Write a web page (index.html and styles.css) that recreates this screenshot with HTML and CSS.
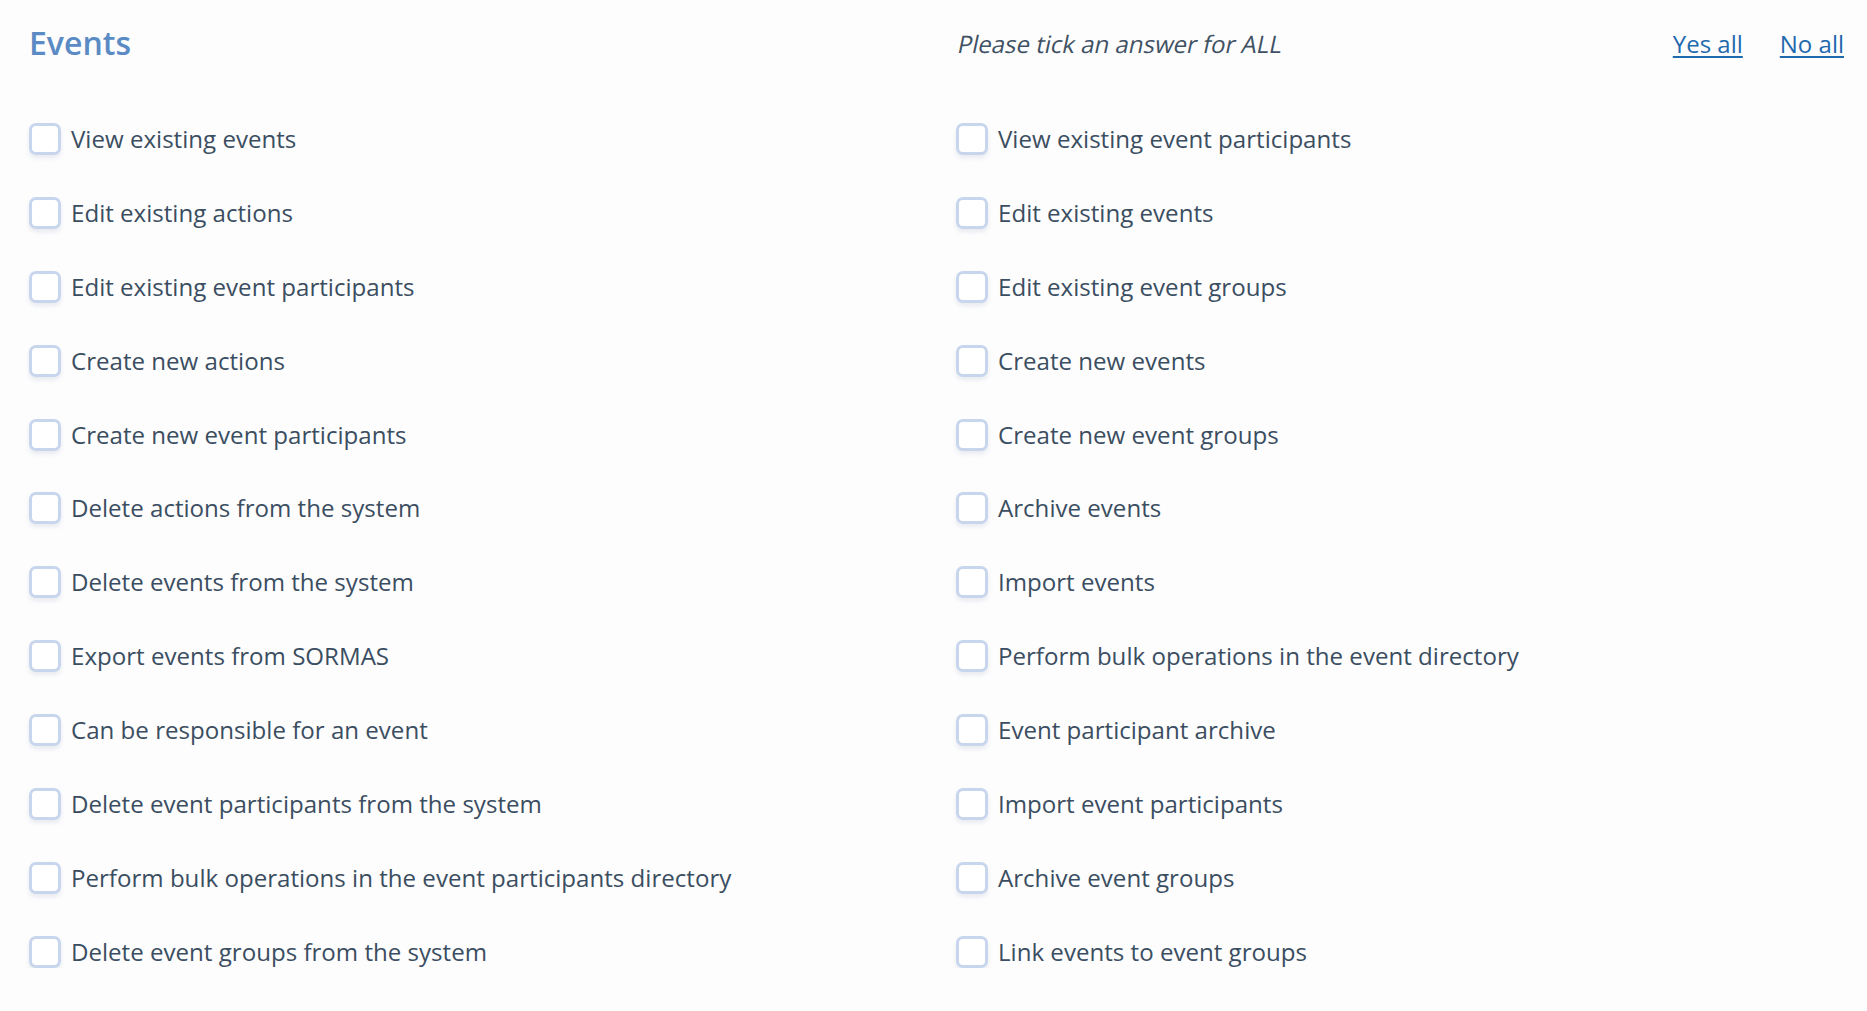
FILE: index.html
```html
<!DOCTYPE html>
<html lang="en">
<head>
<meta charset="utf-8">
<title>Events</title>
<link rel="stylesheet" href="styles.css">
</head>
<body>
<div class="page">
  <div class="header">
    <h1 class="title">Events</h1>
    <div class="header-right">
      <span class="hint">Please tick an answer for ALL</span>
      <div class="links">
        <a href="#" class="link">Yes all</a>
        <a href="#" class="link">No all</a>
      </div>
    </div>
  </div>
  <div class="grid">
    <label class="item"><span class="box"></span><span class="label">View existing events</span></label>
    <label class="item"><span class="box"></span><span class="label">View existing event participants</span></label>
    <label class="item"><span class="box"></span><span class="label">Edit existing actions</span></label>
    <label class="item"><span class="box"></span><span class="label">Edit existing events</span></label>
    <label class="item"><span class="box"></span><span class="label">Edit existing event participants</span></label>
    <label class="item"><span class="box"></span><span class="label">Edit existing event groups</span></label>
    <label class="item"><span class="box"></span><span class="label">Create new actions</span></label>
    <label class="item"><span class="box"></span><span class="label">Create new events</span></label>
    <label class="item"><span class="box"></span><span class="label">Create new event participants</span></label>
    <label class="item"><span class="box"></span><span class="label">Create new event groups</span></label>
    <label class="item"><span class="box"></span><span class="label">Delete actions from the system</span></label>
    <label class="item"><span class="box"></span><span class="label">Archive events</span></label>
    <label class="item"><span class="box"></span><span class="label">Delete events from the system</span></label>
    <label class="item"><span class="box"></span><span class="label">Import events</span></label>
    <label class="item"><span class="box"></span><span class="label">Export events from SORMAS</span></label>
    <label class="item"><span class="box"></span><span class="label">Perform bulk operations in the event directory</span></label>
    <label class="item"><span class="box"></span><span class="label">Can be responsible for an event</span></label>
    <label class="item"><span class="box"></span><span class="label">Event participant archive</span></label>
    <label class="item"><span class="box"></span><span class="label">Delete event participants from the system</span></label>
    <label class="item"><span class="box"></span><span class="label">Import event participants</span></label>
    <label class="item"><span class="box"></span><span class="label">Perform bulk operations in the event participants directory</span></label>
    <label class="item"><span class="box"></span><span class="label">Archive event groups</span></label>
    <label class="item"><span class="box"></span><span class="label">Delete event groups from the system</span></label>
    <label class="item"><span class="box"></span><span class="label">Link events to event groups</span></label>
  </div>
</div>
</body>
</html>
```

FILE: styles.css
```css
html, body {
  margin: 0;
  padding: 0;
  background: #fdfdfe;
}

body {
  font-family: "Open Sans", "Noto Sans", sans-serif;
  color: #3b4e61;
}

.page {
  padding: 21px 23px 0 29px;
}

.header {
  display: grid;
  grid-template-columns: 903px 1fr;
  column-gap: 24px;
  align-items: start;
  height: 102px;
}

.title {
  margin: 0;
  font-size: 32px;
  font-weight: 600;
  color: #5a8bc4;
  line-height: 44px;
}

.header-right {
  display: flex;
  justify-content: space-between;
  align-items: flex-start;
  margin-top: 7px;
}

.hint {
  display: inline-block;
  margin-left: -1px;
  font-size: 24px;
  line-height: 32px;
  color: #3f5163;
  transform: skewX(-12deg);
  transform-origin: 0 100%;
}

.links {
  display: flex;
  gap: 37px;
}

.link {
  font-size: 24px;
  line-height: 32px;
  color: #1f69ad;
  text-decoration: underline;
  text-decoration-thickness: 2px;
  text-underline-offset: 3px;
}

.grid {
  display: grid;
  grid-template-columns: 903px 1fr;
  column-gap: 24px;
  row-gap: 41.9px;
}

.item {
  display: flex;
  align-items: center;
  gap: 10px;
  height: 32px;
  font-size: 24.1px;
}

.box {
  box-sizing: border-box;
  width: 32px;
  height: 32px;
  border: 3px solid #c8d6ed;
  border-radius: 7px;
  background: #fff;
  box-shadow: 0 3px 4px rgba(90, 110, 140, 0.13);
  flex: none;
}

.label {
  line-height: 32px;
  white-space: nowrap;
}
```
